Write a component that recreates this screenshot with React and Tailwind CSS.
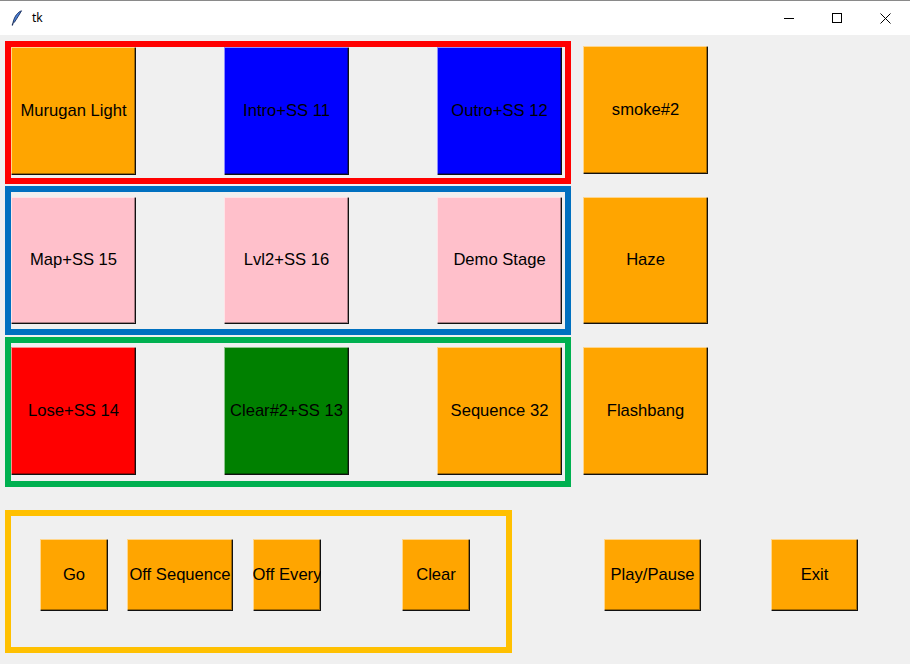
import React from 'react';

const bevel =
  'shadow-[inset_1px_1px_0_rgba(255,255,255,0.55),inset_-1px_-1px_0_#111,inset_-2px_-2px_0_rgba(0,0,0,0.35)]';

const Btn = ({ label, bg = 'bg-[#ffa500]', className = '' }) => (
  <div
    className={`flex shrink-0 items-center justify-center overflow-hidden whitespace-nowrap text-[16.6px] text-black ${bg} ${bevel} ${className}`}
  >
    {label}
  </div>
);

const TitleBar = () => (
  <div className="flex h-[35px] items-center border-t border-[#8a8a8a] bg-white">
    <svg width="12" height="16" viewBox="0 0 12 16" className="ml-[11px]">
      <path d="M10.5 0.8 C7 2 3.5 6 2.2 12 L3.4 12.3 C5.5 8.5 8.5 5 10.5 0.8 Z" fill="#4a7fd6" stroke="#1a2f5c" strokeWidth="0.9" />
      <path d="M2.4 12 L1.2 15.5" stroke="#1a2f5c" strokeWidth="1.2" />
    </svg>
    <span className="ml-[9px] text-[12px] text-black font-['Noto_Sans',sans-serif]">tk</span>
    <div className="ml-auto flex h-full items-center pr-[1px]">
      <div className="flex h-full w-[48px] items-center justify-center">
        <div className="h-px w-[10px] bg-black" />
      </div>
      <div className="flex h-full w-[48px] items-center justify-center">
        <div className="h-[10px] w-[10px] border border-black" />
      </div>
      <div className="flex h-full w-[48px] items-center justify-center">
        <svg width="11" height="11" viewBox="0 0 11 11">
          <path d="M0.5 0.5 L10.5 10.5 M10.5 0.5 L0.5 10.5" stroke="#000" strokeWidth="1" />
        </svg>
      </div>
    </div>
  </div>
);

export default function App() {
  return (
    <div className="h-[664px] w-[910px] overflow-hidden bg-[#f0f0f0] font-['Liberation_Sans',Arial,sans-serif]">
      <TitleBar />
      <div className="pl-[5px] pt-[6px]">
        {/* row 1 */}
        <div className="flex items-start">
          <div className="flex h-[143px] w-[566px] items-start gap-[88px] border-[6px] border-[#ff0000]">
            <Btn label="Murugan Light" className="h-[128px] w-[125px]" />
            <Btn label="Intro+SS 11" bg="bg-[#0000ff]" className="h-[128px] w-[125px]" />
            <Btn label="Outro+SS 12" bg="bg-[#0000ff]" className="h-[128px] w-[125px]" />
          </div>
          <Btn label="smoke#2" className="ml-[12px] mt-[5px] h-[128px] w-[125px]" />
        </div>

        {/* row 2 */}
        <div className="mt-[2px] flex items-start">
          <div className="flex h-[149px] w-[566px] items-start gap-[88px] border-[6px] border-[#0070c0] pt-[5px]">
            <Btn label="Map+SS 15" bg="bg-[#ffc0cb]" className="h-[127px] w-[125px]" />
            <Btn label="Lvl2+SS 16" bg="bg-[#ffc0cb]" className="h-[127px] w-[125px]" />
            <Btn label="Demo Stage" bg="bg-[#ffc0cb]" className="h-[127px] w-[125px]" />
          </div>
          <Btn label="Haze" className="ml-[12px] mt-[11px] h-[127px] w-[125px]" />
        </div>

        {/* row 3 */}
        <div className="mt-[2px] flex items-start">
          <div className="flex h-[150px] w-[566px] items-start gap-[88px] border-[6px] border-[#00b050] pt-[4px]">
            <Btn label="Lose+SS 14" bg="bg-[#ff0000]" className="h-[128px] w-[125px]" />
            <Btn label="Clear#2+SS 13" bg="bg-[#008000]" className="h-[128px] w-[125px]" />
            <Btn label="Sequence 32" className="h-[128px] w-[125px]" />
          </div>
          <Btn label="Flashbang" className="ml-[12px] mt-[10px] h-[128px] w-[125px]" />
        </div>

        {/* controls */}
        <div className="mt-[23px] flex items-start">
          <div className="flex h-[143px] w-[507px] items-start border-[6px] border-[#ffc000] pl-[29px] pt-[23px]">
            <Btn label="Go" className="h-[72px] w-[68px]" />
            <Btn label="Off Sequence" className="ml-[19px] h-[72px] w-[106px]" />
            <Btn label="Off Every" className="ml-[20px] h-[72px] w-[68px]" />
            <Btn label="Clear" className="ml-[81px] h-[72px] w-[68px]" />
          </div>
          <Btn label="Play/Pause" className="ml-[92px] mt-[29px] h-[72px] w-[97px]" />
          <Btn label="Exit" className="ml-[70px] mt-[29px] h-[72px] w-[87px]" />
        </div>
      </div>
    </div>
  );
}
